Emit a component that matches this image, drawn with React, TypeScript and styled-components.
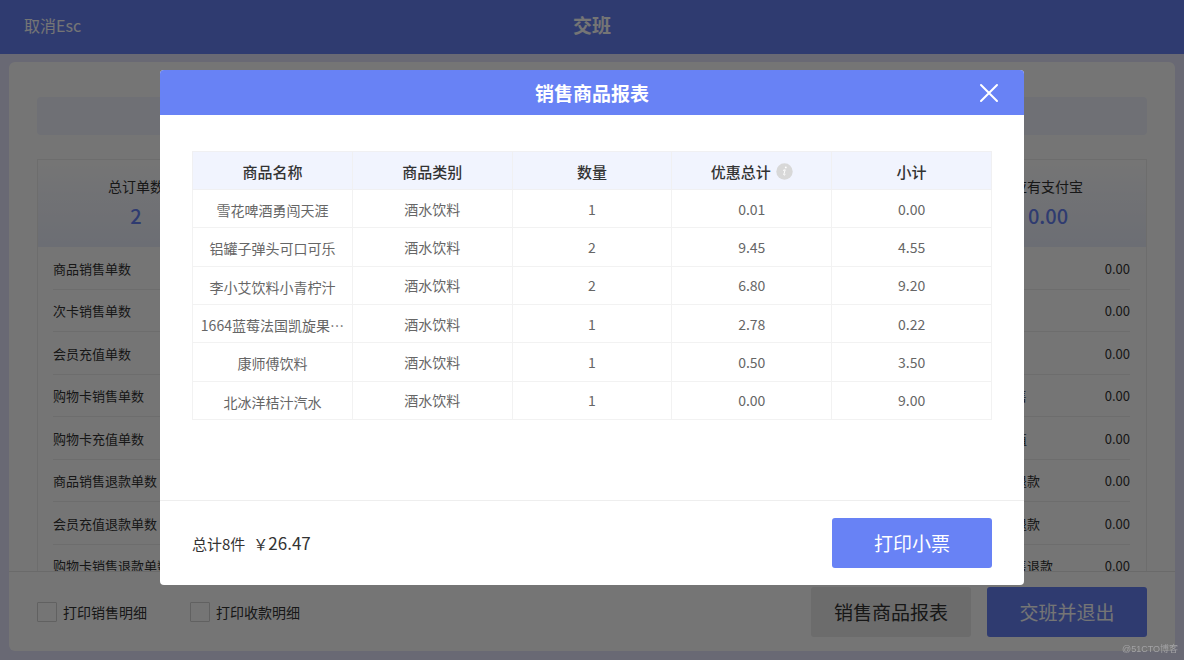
import React from "react";
import styled, { createGlobalStyle } from "styled-components";

const GlobalStyle = createGlobalStyle`
  *, *::before, *::after { box-sizing: border-box; }
  body {
    margin: 0;
    background: #e4e4fc;
    color: #333;
    font-family: "Noto Sans CJK SC", "Noto Sans", sans-serif;
    font-size: 14px;
  }
  button, input { font-family: inherit; }
`;

const Page = styled.div`
  display: flex;
  flex-direction: column;
  height: 100vh;
  min-height: 600px;
`;

const TopBar = styled.header`
  display: grid;
  grid-template-columns: 1fr auto 1fr;
  align-items: center;
  flex: none;
  height: 54px;
  padding: 0 24px 4px;
  background: #6882f5;
  color: #fff;
`;

const CancelButton = styled.button`
  justify-self: start;
  padding: 0;
  border: 0;
  background: none;
  color: inherit;
  font-size: 16px;
  line-height: 24px;
`;

const PageTitle = styled.h1`
  margin: 0;
  font-size: 19px;
  line-height: 28px;
  font-weight: 700;
`;

const Card = styled.main`
  display: flex;
  flex: 1;
  flex-direction: column;
  min-height: 0;
  margin: 8px 9px 9px;
  border-radius: 6px;
  background: #fff;
`;

const Content = styled.div`
  flex: 1;
  min-height: 0;
  padding: 35px 28px 0;
  overflow: hidden;
`;

const Notice = styled.div`
  height: 38px;
  margin-bottom: 24px;
  border-radius: 4px;
  background: #f1f4fe;
`;

const Panel = styled.section`
  border: 1px solid #eeeeee;
`;

const Stats = styled.div`
  display: flex;
  justify-content: space-between;
  height: 87px;
  padding-top: 14px;
  background: linear-gradient(#fff, #ebeffc);
`;

const Stat = styled.div`
  display: flex;
  flex: 0 1 196px;
  flex-direction: column;
  align-items: center;
`;

const StatLabel = styled.span`
  font-size: 14px;
  line-height: 24px;
`;

const StatValue = styled.strong`
  color: #6882f5;
  font-size: 20px;
  font-weight: 500;
  line-height: 36px;
`;

const Lines = styled.ul`
  display: grid;
  grid-auto-rows: 1fr;
  min-height: 340px;
  margin: 0;
  padding: 0 16px 0 15px;
  list-style: none;
`;

const Line = styled.li`
  display: grid;
  grid-template-columns: repeat(2, 168px);
  align-items: center;
  justify-content: space-between;
  padding-top: 2px;
  border-bottom: 1px solid #eeeeee;
  font-size: 13px;
  line-height: 20px;
`;

const Entry = styled.div`
  display: flex;
  justify-content: space-between;
  white-space: nowrap;
`;

const BottomBar = styled.footer`
  display: flex;
  align-items: center;
  flex: none;
  height: 80px;
  border-top: 1px solid #e6e6e6;
  padding: 0 28px;
`;

const CheckLabel = styled.label`
  display: flex;
  align-items: center;
  gap: 6px;
  margin-right: 43px;
  font-size: 14px;
  line-height: 20px;
`;

const CheckBox = styled.input`
  appearance: none;
  width: 20px;
  height: 20px;
  margin: 0;
  border: 1px solid #d4d4d4;
  border-radius: 1px;
  background: #fff;
`;

const Actions = styled.div`
  display: flex;
  gap: 16px;
  margin-left: auto;
`;

const ActionButton = styled.button<{ $plain?: boolean }>`
  width: 160px;
  height: 50px;
  padding: 0;
  border: 0;
  border-radius: 3px;
  background: ${(p) => (p.$plain ? "#ebebeb" : "#6882f5")};
  color: ${(p) => (p.$plain ? "#333" : "#fff")};
  font-size: 19px;
  line-height: 28px;
`;

const Overlay = styled.div`
  position: fixed;
  inset: 0;
  z-index: 1;
  padding: 70px 160px 0;
  background: rgba(0, 0, 0, 0.54);
`;

const Dialog = styled.section`
  overflow: hidden;
  border-radius: 4px;
  background: #fff;
`;

const DialogHeader = styled.header`
  display: grid;
  grid-template-columns: 1fr auto 1fr;
  align-items: center;
  height: 45px;
  padding: 0 25px;
  background: #6882f5;
  color: #fff;
`;

const DialogTitle = styled.h2`
  grid-column: 2;
  margin: 0;
  font-size: 19px;
  font-weight: 700;
  line-height: 28px;
`;

const CloseButton = styled.button`
  display: flex;
  justify-self: end;
  padding: 0;
  border: 0;
  background: none;
  color: inherit;
`;

const DialogBody = styled.div`
  min-height: 385px;
  padding: 36px 32px;
`;

const Table = styled.table`
  width: 100%;
  height: 269px;
  table-layout: fixed;
  border-collapse: collapse;
  text-align: center;
`;

const HeadCell = styled.th`
  height: 38px;
  padding: 2px 7px 0;
  border: 1px solid #f0f0f2;
  background: #f1f4fe;
  font-size: 15px;
  font-weight: 500;
  line-height: 22px;
`;

const HeadContent = styled.span`
  display: flex;
  align-items: center;
  justify-content: center;
  gap: 5px;
`;

const Cell = styled.td<{ $name?: boolean }>`
  padding: ${(p) => (p.$name ? "3px 7px 0" : "0 7px")};
  overflow: hidden;
  border: 1px solid #f2f2f2;
  color: #666;
  font-size: 14px;
  line-height: 20px;
  text-overflow: ellipsis;
  white-space: nowrap;
`;

const DialogFooter = styled.footer`
  display: flex;
  align-items: center;
  justify-content: space-between;
  height: 85px;
  padding: 0 32px;
  border-top: 1px solid #eeeeee;
`;

const Total = styled.p`
  display: flex;
  align-items: baseline;
  gap: 8px;
  margin: 0;
  font-size: 15px;
  line-height: 24px;
`;

const Amount = styled.span`
  font-size: 17px;
`;

const Currency = styled.span`
  font-size: 15px;
`;

const Watermark = styled.span`
  position: fixed;
  right: 6px;
  bottom: 4px;
  z-index: 2;
  color: #a3a3a5;
  font-family: "Liberation Sans", "Noto Sans CJK SC", sans-serif;
  font-size: 9px;
  line-height: 14px;
`;

const stats = [
  ["总订单数", "2"],
  ["应有支付宝", "0.00"],
];

const lines = [
  "商品销售",
  "次卡销售",
  "会员充值",
  "购物卡销售",
  "购物卡充值",
  "商品销售退款",
  "会员充值退款",
  "购物卡销售退款",
];

const columns = ["商品名称", "商品类别", "数量", "优惠总计", "小计"];

const products = [
  ["雪花啤酒勇闯天涯", "酒水饮料", "1", "0.01", "0.00"],
  ["铝罐子弹头可口可乐", "酒水饮料", "2", "9.45", "4.55"],
  ["李小艾饮料小青柠汁", "酒水饮料", "2", "6.80", "9.20"],
  ["1664蓝莓法国凯旋果…", "酒水饮料", "1", "2.78", "0.22"],
  ["康师傅饮料", "酒水饮料", "1", "0.50", "3.50"],
  ["北冰洋桔汁汽水", "酒水饮料", "1", "0.00", "9.00"],
];

const InfoIcon = () => (
  <svg width="17" height="17" viewBox="0 0 17 17" aria-hidden="true">
    <circle cx="8.5" cy="8.5" r="8.2" fill="#d8d8d8" />
    <circle cx="9.8" cy="4.4" r="0.9" fill="#fff" />
    <path
      d="M7.4 7.3 L9.2 6.8 L7.7 11.8 Q7.5 12.8 9.1 11.6"
      fill="none"
      stroke="#fff"
      strokeWidth="1"
      strokeLinecap="round"
      strokeLinejoin="round"
    />
  </svg>
);

const CloseIcon = () => (
  <svg width="20" height="20" viewBox="0 0 20 20" aria-hidden="true">
    <path d="M2 2 L18 18 M18 2 L2 18" stroke="currentColor" strokeWidth="2" strokeLinecap="round" />
  </svg>
);

export default function App() {
  return (
    <>
      <GlobalStyle />
      <Page>
        <TopBar>
          <CancelButton type="button">取消Esc</CancelButton>
          <PageTitle>交班</PageTitle>
        </TopBar>
        <Card>
          <Content>
            <Notice />
            <Panel>
              <Stats>
                {stats.map(([label, value]) => (
                  <Stat key={label}>
                    <StatLabel>{label}</StatLabel>
                    <StatValue>{value}</StatValue>
                  </Stat>
                ))}
              </Stats>
              <Lines>
                {lines.map((name) => (
                  <Line key={name}>
                    <Entry>
                      <span>{name}单数</span>
                    </Entry>
                    <Entry>
                      <span>{name}</span>
                      <span>0.00</span>
                    </Entry>
                  </Line>
                ))}
              </Lines>
            </Panel>
          </Content>
          <BottomBar>
            <CheckLabel>
              <CheckBox type="checkbox" />
              打印销售明细
            </CheckLabel>
            <CheckLabel>
              <CheckBox type="checkbox" />
              打印收款明细
            </CheckLabel>
            <Actions>
              <ActionButton type="button" $plain>
                销售商品报表
              </ActionButton>
              <ActionButton type="button">交班并退出</ActionButton>
            </Actions>
          </BottomBar>
        </Card>
      </Page>
      <Overlay>
        <Dialog role="dialog" aria-modal="true" aria-labelledby="report-title">
          <DialogHeader>
            <DialogTitle id="report-title">销售商品报表</DialogTitle>
            <CloseButton type="button" aria-label="关闭">
              <CloseIcon />
            </CloseButton>
          </DialogHeader>
          <DialogBody>
            <Table>
              <thead>
                <tr>
                  {columns.map((name) => (
                    <HeadCell key={name} scope="col">
                      <HeadContent>
                        {name}
                        {name === "优惠总计" && <InfoIcon />}
                      </HeadContent>
                    </HeadCell>
                  ))}
                </tr>
              </thead>
              <tbody>
                {products.map((row) => (
                  <tr key={row[0]}>
                    {row.map((value, i) => (
                      <Cell key={columns[i]} $name={i === 0}>
                        {value}
                      </Cell>
                    ))}
                  </tr>
                ))}
              </tbody>
            </Table>
          </DialogBody>
          <DialogFooter>
            <Total>
              <span>总计8件</span>
              <Amount>
                <Currency>￥</Currency>26.47
              </Amount>
            </Total>
            <ActionButton type="button">打印小票</ActionButton>
          </DialogFooter>
        </Dialog>
      </Overlay>
      <Watermark>@51CTO博客</Watermark>
    </>
  );
}
